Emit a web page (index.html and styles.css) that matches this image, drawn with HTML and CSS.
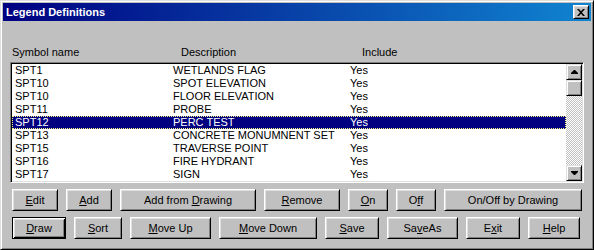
FILE: index.html
```html
<!DOCTYPE html>
<html lang="en">

<head>
    <meta charset="UTF-8">
    <title>Legend Definitions</title>
    <link rel="stylesheet" href="styles.css">
</head>

<body>
    <div class="window">
        <div class="titlebar">
            <span class="title">Legend Definitions</span>
            <button class="close">
                <svg width="8" height="7" viewBox="0 0 8 7"><path d="M0 0h2l2 2.2L6 0h2L5 3.5 8 7H6L4 4.8 2 7H0l3-3.5z" /></svg>
            </button>
        </div>

        <div class="content">
            <div class="headers">
                <span>Symbol name</span>
                <span>Description</span>
                <span>Include</span>
            </div>

            <div class="listbox">
                <div class="rows">
                    <div class="row"><span>SPT1</span><span>WETLANDS FLAG</span><span>Yes</span></div>
                    <div class="row"><span>SPT10</span><span>SPOT ELEVATION</span><span>Yes</span></div>
                    <div class="row"><span>SPT10</span><span>FLOOR ELEVATION</span><span>Yes</span></div>
                    <div class="row"><span>SPT11</span><span>PROBE</span><span>Yes</span></div>
                    <div class="row valgt"><span>SPT12</span><span>PERC TEST</span><span>Yes</span></div>
                    <div class="row"><span>SPT13</span><span>CONCRETE MONUMNENT SET</span><span>Yes</span></div>
                    <div class="row"><span>SPT15</span><span>TRAVERSE POINT</span><span>Yes</span></div>
                    <div class="row"><span>SPT16</span><span>FIRE HYDRANT</span><span>Yes</span></div>
                    <div class="row"><span>SPT17</span><span>SIGN</span><span>Yes</span></div>
                </div>
                <div class="scrollbar">
                    <div class="sb-knap">
                        <svg width="7" height="4" viewBox="0 0 7 4"><path d="M3 0h1l3 3v1H0V3z" /></svg>
                    </div>
                    <div class="sb-knap"></div>
                    <div class="sb-spor"></div>
                    <div class="sb-knap">
                        <svg width="7" height="4" viewBox="0 0 7 4"><path d="M0 0h7v1L4 4H3L0 1z" /></svg>
                    </div>
                </div>
            </div>

            <div class="knapper">
                <button class="w46"><u>E</u>dit</button>
                <button class="w46"><u>A</u>dd</button>
                <button class="w136">Add from <u>D</u>rawing</button>
                <button class="w76"><u>R</u>emove</button>
                <button class="w40"><u>O</u>n</button>
                <button class="w40">O<u>f</u>f</button>
                <button class="w138">On/Off by Drawing</button>
            </div>
            <div class="knapper">
                <button class="w54 standard"><u>D</u>raw</button>
                <button class="w48"><u>S</u>ort</button>
                <button class="w81"><u>M</u>ove Up</button>
                <button class="w98"><u>M</u>ove Down</button>
                <button class="w54"><u>S</u>ave</button>
                <button class="w71">Sa<u>v</u>eAs</button>
                <button class="w54">E<u>x</u>it</button>
                <button class="w52"><u>H</u>elp</button>
            </div>
        </div>
    </div>
</body></html>
```

FILE: styles.css
```css
body {
    margin: 0;
    font-family: "Liberation Sans", Arial, sans-serif;
    font-size: 11px;
    color: black;
}

.window {
    width: 594px;
    height: 250px;
    box-sizing: border-box;
    background: #c0c0c0;
    border: 1px solid;
    border-color: #dfdfdf #000 #000 #dfdfdf;
    box-shadow: inset 1px 1px #fff, inset -1px -1px #808080;
    padding: 2px;
}

.titlebar {
    height: 18px;
    display: flex;
    align-items: center;
    justify-content: space-between;
    padding: 0 2px 0 3px;
    background: linear-gradient(to right, #000080, #1084d0);
}

.title {
    color: white;
    font-weight: bold;
    line-height: 13px;
}

button {
    font: inherit;
    color: black;
    padding: 0;
    margin: 0;
    height: 22px;
    background: #c0c0c0;
    border: 1px solid;
    border-color: #fff #000 #000 #fff;
    box-shadow: inset 1px 1px #dfdfdf, inset -1px -1px #808080;
    line-height: 13px;
}

button u {
    text-underline-offset: 1px;
}

.close {
    width: 16px;
    height: 14px;
    display: flex;
    align-items: center;
    justify-content: center;
}

.content {
    padding: 25px 7px 0 7px;
}

.headers {
    display: grid;
    grid-template-columns: 169px 181px 1fr;
    padding-left: 2px;
    line-height: 13px;
    margin-bottom: 3px;
}

.listbox {
    display: flex;
    height: 117px;
    background: white;
    border: 1px solid;
    border-color: #808080 #fff #fff #808080;
    box-shadow: inset 1px 1px #000, inset -1px -1px #dfdfdf;
    padding: 1px;
}

.rows {
    flex: 1;
    overflow: hidden;
}

.row {
    display: grid;
    grid-template-columns: 158px 177px 1fr;
    padding-left: 3px;
    height: 13px;
    line-height: 13px;
    white-space: nowrap;
}

.valgt {
    background: #000080;
    color: white;
    outline: 1px dotted #ffff80;
    outline-offset: -1px;
}

.scrollbar {
    width: 16px;
    display: flex;
    flex-direction: column;
}

.sb-knap {
    height: 16px;
    box-sizing: border-box;
    background: #c0c0c0;
    border: 1px solid;
    border-color: #dfdfdf #000 #000 #dfdfdf;
    box-shadow: inset 1px 1px #fff, inset -1px -1px #808080;
    display: flex;
    align-items: center;
    justify-content: center;
}

.sb-spor {
    flex: 1;
    background: repeating-conic-gradient(#c0c0c0 0 25%, #fff 0 50%) 0 0 / 2px 2px;
}

.knapper {
    display: flex;
    gap: 8px;
    padding-left: 2px;
    margin-top: 6px;
}

.standard {
    border-color: #000;
    box-shadow: inset 1px 1px #fff, inset -1px -1px #000, inset 2px 2px #dfdfdf, inset -2px -2px #808080;
}

.w40 { width: 40px; }
.w46 { width: 46px; }
.w48 { width: 48px; }
.w52 { width: 52px; }
.w54 { width: 54px; }
.w71 { width: 71px; }
.w76 { width: 76px; }
.w81 { width: 81px; }
.w98 { width: 98px; }
.w136 { width: 136px; }
.w138 { width: 138px; }
```
